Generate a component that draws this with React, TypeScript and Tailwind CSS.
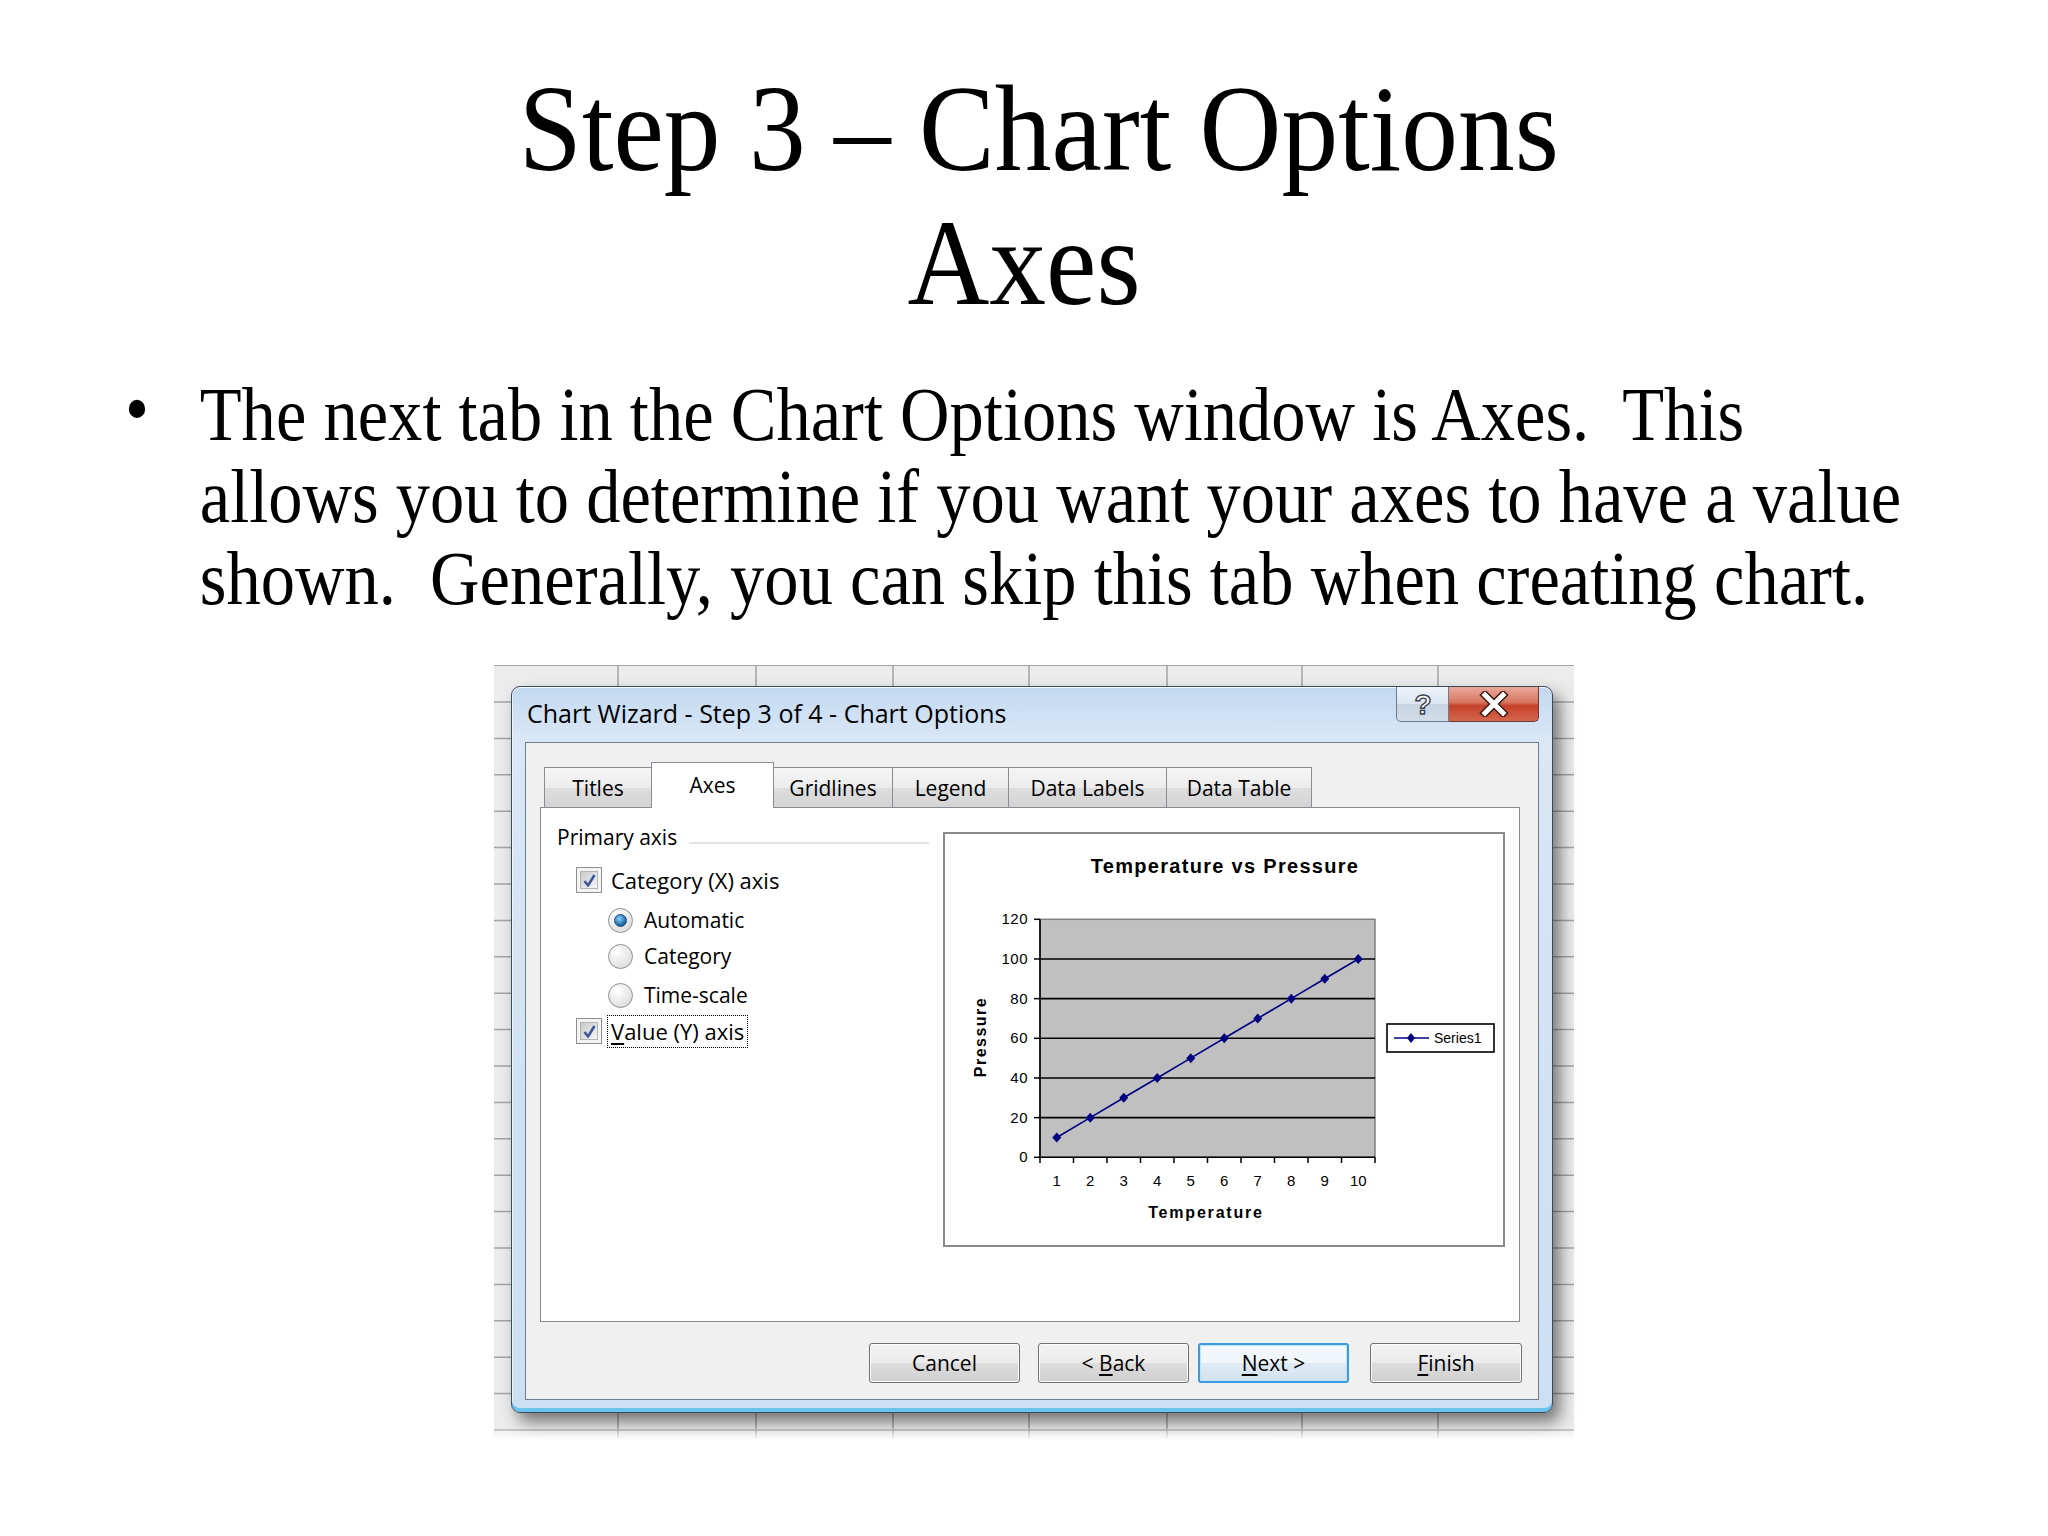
import React from 'react';

// Dialog pieces (Vista-style Excel Chart Wizard)

const tabs = [
  { label: 'Titles', w: 'w-[108px]' },
  { label: 'Axes', w: 'w-[123px]', active: true },
  { label: 'Gridlines', w: 'w-[120px]' },
  { label: 'Legend', w: 'w-[117px]' },
  { label: 'Data Labels', w: 'w-[159px]' },
  { label: 'Data Table', w: 'w-[146px]' },
];

const CheckBox = () => (
  <div className="w-[26px] h-[26px] shrink-0 border border-[#8e8f8f] bg-[#f4f4f4] p-[3px]">
    <div className="w-full h-full border border-[#b4b4b4] bg-[linear-gradient(135deg,#c9c9c9,#f7f7f7)] flex items-center justify-center">
      <svg width="15" height="15" viewBox="0 0 15 15">
        <path d="M2.5 8 L6 12.5 L12.5 2" fill="none" stroke="#3f569a" strokeWidth="2.6" strokeLinejoin="round" />
      </svg>
    </div>
  </div>
);

const Radio = ({ on }: { on?: boolean }) => (
  <div className="w-[25px] h-[25px] shrink-0 rounded-full border border-[#8e8f8f] bg-[radial-gradient(circle_at_35%_30%,#ffffff,#d4d4d4)] flex items-center justify-center">
    {on && (
      <div className="w-[13px] h-[13px] rounded-full border border-[#1c4e7e] bg-[radial-gradient(circle_at_40%_35%,#86d2f6,#1b5fa3_70%)]" />
    )}
  </div>
);

const Button = ({ children, def, className }: { children: React.ReactNode; def?: boolean; className: string }) => (
  <div
    className={`h-[40px] w-[151px] rounded-[3px] flex items-center justify-center text-[21px] leading-none text-black ${
      def
        ? 'border-2 border-[#3c9be0] bg-[linear-gradient(180deg,#f4f9fd_0%,#eef5fb_49%,#dfeaf4_50%,#d4e2ef_100%)] shadow-[inset_0_0_0_1px_#bfe4f9]'
        : 'border border-[#707070] bg-[linear-gradient(180deg,#f2f2f2_0%,#ebebeb_49%,#dddddd_50%,#cfcfcf_100%)] shadow-[inset_0_0_0_1px_#fbfbfb]'
    } ${className}`}
  >
    {children}
  </div>
);

const xPts = Array.from({ length: 10 }, (_, i) => 97 + 33.5 * (i + 0.5));
const series = xPts.map((x, i) => ({ x, y: 325.3 - (i + 1) * 10 * 1.9833 }));
const yTicks = [120, 100, 80, 60, 40, 20, 0];

const Chart = () => (
  <div className="w-[562px] h-[415px] shrink-0 border-2 border-[#8a8a8a] bg-white">
    <svg width="558" height="411" viewBox="2 2 558 411" className="block">
      <text x="282" y="41" textAnchor="middle" fontFamily="Liberation Sans, Arial, sans-serif" fontWeight="bold" fontSize="20" letterSpacing="1.3" fill="#000">
        Temperature vs Pressure
      </text>
      <rect x="97" y="87.3" width="335" height="238" fill="#c0c0c0" stroke="#808080" strokeWidth="1.5" />
      {[100, 80, 60, 40, 20].map(v => (
        <line key={v} x1="97" x2="432" y1={325.3 - v * 1.9833} y2={325.3 - v * 1.9833} stroke="#000" strokeWidth="1.6" />
      ))}
      <line x1="97" x2="97" y1="87.3" y2="325.3" stroke="#000" strokeWidth="1.6" />
      <line x1="97" x2="432" y1="325.3" y2="325.3" stroke="#000" strokeWidth="1.6" />
      {yTicks.map(v => (
        <g key={v}>
          <line x1="91" x2="97" y1={325.3 - v * 1.9833} y2={325.3 - v * 1.9833} stroke="#000" strokeWidth="1.5" />
          <text x="85" y={325.3 - v * 1.9833 + 5} textAnchor="end" fontFamily="Liberation Sans, Arial, sans-serif" fontSize="15" letterSpacing="0.5" fill="#000">
            {v}
          </text>
        </g>
      ))}
      {Array.from({ length: 11 }, (_, i) => (
        <line key={i} x1={97 + 33.5 * i} x2={97 + 33.5 * i} y1="325.3" y2="331" stroke="#000" strokeWidth="1.5" />
      ))}
      {xPts.map((x, i) => (
        <text key={i} x={x} y="354" textAnchor="middle" fontFamily="Liberation Sans, Arial, sans-serif" fontSize="15" fill="#000">
          {i + 1}
        </text>
      ))}
      <polyline points={series.map(p => `${p.x},${p.y}`).join(' ')} fill="none" stroke="#000080" strokeWidth="1.6" />
      {series.map((p, i) => (
        <path key={i} d={`M${p.x} ${p.y - 5} L${p.x + 4.5} ${p.y} L${p.x} ${p.y + 5} L${p.x - 4.5} ${p.y} Z`} fill="#000080" />
      ))}
      <text x="263" y="386" textAnchor="middle" fontFamily="Liberation Sans, Arial, sans-serif" fontWeight="bold" fontSize="16" letterSpacing="1.8" fill="#000">
        Temperature
      </text>
      <text x="0" y="0" transform="translate(43 205) rotate(-90)" textAnchor="middle" fontFamily="Liberation Sans, Arial, sans-serif" fontWeight="bold" fontSize="16" letterSpacing="1.5" fill="#000">
        Pressure
      </text>
      <rect x="444" y="192" width="107" height="28" fill="#fff" stroke="#000" strokeWidth="1.6" />
      <line x1="451" x2="486" y1="206" y2="206" stroke="#000080" strokeWidth="1.6" />
      <path d="M468 201 L472 206 L468 211 L464 206 Z" fill="#000080" />
      <text x="491" y="211" fontFamily="Liberation Sans, Arial, sans-serif" fontSize="14" fill="#000">
        Series1
      </text>
    </svg>
  </div>
);

// Excel sheet grid peeking out behind the dialog
const SheetGrid = () => {
  const cols = [124, 262, 399, 535, 673, 808, 944];
  const rows = Array.from({ length: 21 }, (_, k) => 37 + 36.4 * k);
  return (
    <svg className="absolute inset-0" width="1080" height="775" viewBox="0 0 1080 775">
      <defs>
        <linearGradient id="fade" x1="0" y1="0" x2="0" y2="1">
          <stop offset="0" stopColor="#ffffff" stopOpacity="0" />
          <stop offset="1" stopColor="#ffffff" stopOpacity="1" />
        </linearGradient>
      </defs>
      <rect width="1080" height="775" fill="#ececec" />
      <line x1="0" x2="1080" y1="0.5" y2="0.5" stroke="#a3a3a3" />
      {cols.map(x => (
        <line key={x} x1={x} x2={x} y1="0" y2="775" stroke="#a3a3a3" strokeWidth="1.5" />
      ))}
      {rows.map(y => (
        <line key={y} x1="0" x2="1080" y1={y} y2={y} stroke="#a3a3a3" strokeWidth="1.5" />
      ))}
      <rect y="762" width="1080" height="13" fill="url(#fade)" />
    </svg>
  );
};

const ChartWizard = () => (
  <div className="relative w-[1042px] h-[727px] rounded-[9px] border border-[#3d4a5c] bg-[linear-gradient(180deg,#c2d8f0_0%,#d9e7f6_7%,#d0e1f3_60%,#cddff2_100%)] shadow-[inset_0_-4px_0_#6cc3ee,inset_0_1px_0_rgba(255,255,255,0.85),inset_1px_0_0_rgba(255,255,255,0.6),7px_9px_16px_rgba(0,0,0,0.5)] flex flex-col font-['Open_Sans','Noto_Sans',sans-serif]">
    {/* title bar */}
    <div className="h-[55px] shrink-0 flex justify-between pl-[15px] pr-[13px]">
      <div className="pt-[11px] text-[25px] leading-[30px] text-black">Chart Wizard - Step 3 of 4 - Chart Options</div>
      <div className="flex h-[35px]">
        <div className="w-[53px] h-full rounded-bl-[5px] border border-t-0 border-[#6b7a8e] bg-[linear-gradient(180deg,#eef3f9_0%,#dde6f1_50%,#c7d3e2_51%,#d3dde9_100%)] flex items-center justify-center">
          <svg width="22" height="30" viewBox="0 0 22 30">
            <text x="11" y="25" textAnchor="middle" fontFamily="Liberation Sans, Arial, sans-serif" fontWeight="bold" fontSize="28" fill="#ffffff" stroke="#3a4350" strokeWidth="1.4">
              ?
            </text>
          </svg>
        </div>
        <div className="w-[90px] h-full rounded-br-[5px] border border-t-0 border-l-0 border-[#6b3a33] bg-[linear-gradient(180deg,#e9a99a_0%,#d8765f_45%,#c4412a_55%,#d5664c_100%)] flex items-center justify-center">
          <svg width="32" height="26" viewBox="0 0 32 26">
            <path d="M7 4 L25 22 M25 4 L7 22" stroke="#3d1a14" strokeWidth="8" strokeLinecap="square" />
            <path d="M7 4 L25 22 M25 4 L7 22" stroke="#ffffff" strokeWidth="5" strokeLinecap="square" />
          </svg>
        </div>
      </div>
    </div>

    {/* client area */}
    <div className="mx-[13px] h-[658px] shrink-0 border border-[#6f7c8c] bg-[#f0f0f0] flex flex-col text-black">
      <div className="mt-[19px] ml-[18px] h-[45px] flex items-end relative z-10">
        {tabs.map((t, i) =>
          t.active ? (
            <div
              key={t.label}
              className={`${t.w} h-[46px] -mb-px -ml-px border border-b-0 border-[#898c95] bg-white flex items-center justify-center text-[21px]`}
            >
              {t.label}
            </div>
          ) : (
            <div
              key={t.label}
              className={`${t.w} h-[40px] ${i > 0 ? '-ml-px' : ''} border border-b-0 border-[#898c95] bg-[linear-gradient(180deg,#f5f5f5_0%,#ececec_50%,#dedede_51%,#d4d4d4_100%)] flex items-center justify-center text-[21px] pt-[2px]`}
            >
              {t.label}
            </div>
          )
        )}
      </div>

      <div className="ml-[14px] w-[980px] h-[515px] shrink-0 border border-[#898c95] bg-white flex">
        <div className="w-[402px] pl-[16px] pr-[14px] pt-[15px] text-[21px]">
          <div className="h-[28px] leading-[28px] flex items-start">
            <span>Primary axis</span>
            <div className="flex-1 ml-[12px] mt-[19px] h-[2px] bg-[#dfe4e8]" />
          </div>
          <div className="mt-[16px] ml-[19px] h-[26px] flex items-center leading-[26px]">
            <CheckBox />
            <span className="ml-[9px] text-[22px]">
              Cate<span className="underline underline-offset-[3px]">g</span>ory (X) axis
            </span>
          </div>
          <div className="mt-[14px] ml-[51px] h-[26px] flex items-center leading-[26px]">
            <Radio on />
            <span className="ml-[11px]">Automatic</span>
          </div>
          <div className="mt-[10px] ml-[51px] h-[26px] flex items-center leading-[26px]">
            <Radio />
            <span className="ml-[11px]">Category</span>
          </div>
          <div className="mt-[13px] ml-[51px] h-[26px] flex items-center leading-[26px]">
            <Radio />
            <span className="ml-[11px]">Time-scale</span>
          </div>
          <div className="mt-[10px] ml-[19px] h-[26px] flex items-center leading-[26px]">
            <CheckBox />
            <span className="ml-[5px] h-[33px] px-[3px] border border-dotted border-black flex items-center">
              <span className="text-[22px]">
                <span className="underline underline-offset-[3px]">V</span>alue (Y) axis
              </span>
            </span>
          </div>
        </div>
        <div className="mt-[24px]">
          <Chart />
        </div>
      </div>

      <div className="mt-[21px] h-[40px] flex">
        <Button className="ml-[343px]">Cancel</Button>
        <Button className="ml-[18px]">
          &lt;&nbsp;<span className="underline underline-offset-[3px]">B</span>ack
        </Button>
        <Button def className="ml-[9px]">
          <span className="underline underline-offset-[3px]">N</span>ext &gt;
        </Button>
        <Button className="ml-[21px] w-[152px]">
          <span className="underline underline-offset-[3px]">F</span>inish
        </Button>
      </div>
    </div>
  </div>
);

export default function App() {
  return (
    <div className="w-[2048px] h-[1536px] bg-white overflow-hidden text-black">
      {/* slide title */}
      <div className="pt-[62px] text-center font-['Liberation_Serif','Times_New_Roman',serif] text-[122px] leading-[134px] scale-x-[0.93]">
        <div className="pl-[32px]">Step 3 – Chart Options</div>
        <div>Axes</div>
      </div>

      {/* bullet text */}
      <div className="mt-[43px] ml-[125px] flex origin-left scale-x-[0.89] font-['Liberation_Serif','Times_New_Roman',serif] text-[77px] leading-[82px] whitespace-pre">
        <div className="w-[84px] shrink-0 -mt-[6px]">•</div>
        <div className="shrink-0">
          <div>The next tab in the Chart Options window is Axes.  This</div>
          <div>allows you to determine if you want your axes to have a value</div>
          <div>shown.  Generally, you can skip this tab when creating chart.</div>
        </div>
      </div>

      {/* screenshot of the wizard */}
      <div className="mt-[46px] ml-[494px] w-[1080px] h-[775px] relative pt-[21px] pl-[17px]">
        <SheetGrid />
        <ChartWizard />
      </div>
    </div>
  );
}
